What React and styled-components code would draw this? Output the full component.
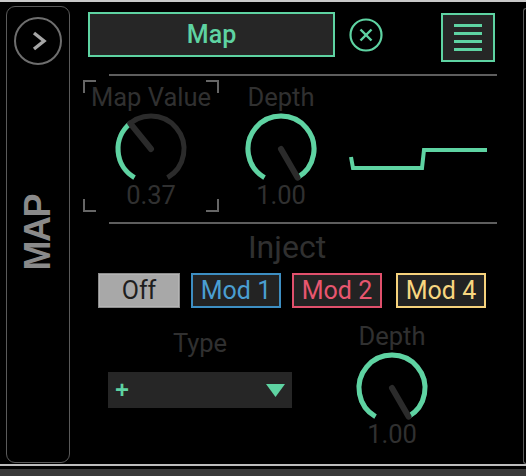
import React from "react";
import styled, { createGlobalStyle } from "styled-components";

const GREEN = "#5ed3a2";
const DARK = "#2b2b2b";
const LABEL = "#303030";

const GlobalStyle = createGlobalStyle`
  html, body {
    margin: 0;
    padding: 0;
    background: #000;
  }
  body {
    font-family: Roboto, "Liberation Sans", sans-serif;
  }
`;

const polar = (cx, cy, r, deg) => {
  const a = (deg * Math.PI) / 180;
  return [cx + r * Math.sin(a), cy - r * Math.cos(a)];
};

const arcPath = (cx, cy, r, from, to) => {
  const [x1, y1] = polar(cx, cy, r, from);
  const [x2, y2] = polar(cx, cy, r, to);
  const large = to - from > 180 ? 1 : 0;
  return `M ${x1} ${y1} A ${r} ${r} 0 ${large} 1 ${x2} ${y2}`;
};

const Knob = ({ value }) => {
  const c = 36;
  const r = 33;
  const end = -150 + 300 * value;
  const [px, py] = polar(c, c, r, end);
  return (
    <KnobSvg width="72" height="72" viewBox="0 0 72 72">
      <path d={arcPath(c, c, r, -150, 150)} stroke={DARK} strokeWidth="5" fill="none" />
      <path d={arcPath(c, c, r, -150, end)} stroke={GREEN} strokeWidth="5" fill="none" />
      <line x1={c} y1={c} x2={px} y2={py} stroke={DARK} strokeWidth="6" strokeLinecap="round" />
    </KnobSvg>
  );
};

const KnobGroup = ({ label, value, display }) => (
  <>
    <Label>{label}</Label>
    <Knob value={value} />
    <Value>{display}</Value>
  </>
);

export default function App() {
  return (
    <Page>
      <GlobalStyle />
      <TopStrip />
      <Main>
        <SidePanel>
          <ExpandButton>
            <svg width="20" height="24" viewBox="0 0 20 24">
              <polyline points="5,4 15,12 5,20" fill="none" stroke="#a6a6a6" strokeWidth="3.4" />
            </svg>
          </ExpandButton>
          <SideTitle>MAP</SideTitle>
        </SidePanel>

        <Content>
          <Header>
            <MapButton>Map</MapButton>
            <CloseIcon width="34" height="34" viewBox="0 0 34 34">
              <circle cx="17" cy="17" r="15.5" fill="none" stroke={GREEN} strokeWidth="2.2" />
              <line x1="11.5" y1="11.5" x2="22.5" y2="22.5" stroke={GREEN} strokeWidth="2.4" />
              <line x1="22.5" y1="11.5" x2="11.5" y2="22.5" stroke={GREEN} strokeWidth="2.4" />
            </CloseIcon>
            <MenuButton>
              <MenuLine />
              <MenuLine />
              <MenuLine />
              <MenuLine />
            </MenuButton>
          </Header>

          <Separator $top={12} />

          <MappingRow>
            <MapValueBox>
              <Corner $v="top" $h="left" />
              <Corner $v="top" $h="right" />
              <Corner $v="bottom" $h="left" />
              <Corner $v="bottom" $h="right" />
              <KnobGroup label="Map Value" value={0.37} display="0.37" />
            </MapValueBox>
            <KnobColumn $left={22}>
              <KnobGroup label="Depth" value={1} display="1.00" />
            </KnobColumn>
            <Wave width="140" height="26" viewBox="0 0 140 26">
              <polyline
                points="2,11 4,22 73,22 75,4 138,4"
                fill="none"
                stroke={GREEN}
                strokeWidth="4"
              />
            </Wave>
          </MappingRow>

          <Separator $top={10} />

          <SectionTitle>Inject</SectionTitle>

          <ModRow>
            <OffButton>Off</OffButton>
            <ModButton $color="#3d8ec2" $text="#4a9ed2">Mod 1</ModButton>
            <ModButton $color="#e0506c" $text="#e8566f">Mod 2</ModButton>
            <ModButton $color="#f6d27c" $text="#f8d680" $gap={3}>Mod 4</ModButton>
          </ModRow>

          <InjectRow>
            <TypeColumn>
              <Label>Type</Label>
              <Dropdown>
                <Plus>+</Plus>
                <svg width="19" height="13" viewBox="0 0 19 13">
                  <polygon points="0,0 19,0 9.5,13" fill={GREEN} />
                </svg>
              </Dropdown>
            </TypeColumn>
            <KnobColumn $left={60} $pad={0}>
              <KnobGroup label="Depth" value={1} display="1.00" />
            </KnobColumn>
          </InjectRow>
        </Content>

        <NextPanel />
      </Main>
      <BottomLine />
      <BottomGap />
      <BottomBar />
    </Page>
  );
}

const Page = styled.div`
  width: 526px;
  height: 476px;
  display: flex;
  flex-direction: column;
  background: #000;
  overflow: hidden;
`;

const TopStrip = styled.div`
  height: 2px;
  background: #c9c9c9;
`;

const Main = styled.div`
  height: 462px;
  display: flex;
  align-items: flex-start;
`;

const SidePanel = styled.div`
  box-sizing: border-box;
  width: 64px;
  height: 457px;
  margin: 4px 0 0 6px;
  border: 1.5px solid #5a5a5a;
  border-radius: 9px;
  display: flex;
  flex-direction: column;
  align-items: center;
`;

const ExpandButton = styled.div`
  box-sizing: border-box;
  width: 48px;
  height: 48px;
  margin-top: 10px;
  border: 2px solid #6e6e6e;
  border-radius: 50%;
  display: flex;
  align-items: center;
  justify-content: center;
  padding-left: 2px;
`;

const SideTitle = styled.div`
  margin-top: 130px;
  writing-mode: vertical-rl;
  transform: rotate(180deg);
  font-family: "Liberation Sans", Arial, sans-serif;
  font-weight: bold;
  font-size: 36px;
  line-height: 36px;
  letter-spacing: -1.5px;
  color: #8a8a8a;
`;

const Content = styled.div`
  flex: 1;
  display: flex;
  flex-direction: column;
`;

const Header = styled.div`
  display: flex;
  align-items: flex-start;
  padding: 10px 0 0 18px;
`;

const MapButton = styled.div`
  box-sizing: border-box;
  width: 247px;
  height: 45px;
  border: 2px solid ${GREEN};
  background: #262626;
  color: ${GREEN};
  font-size: 25px;
  font-weight: 500;
  display: flex;
  align-items: center;
  justify-content: center;
`;

const CloseIcon = styled.svg`
  margin: 6px 0 0 14px;
`;

const MenuButton = styled.div`
  box-sizing: border-box;
  width: 54px;
  height: 49px;
  margin: 1px 0 0 58px;
  border: 2px solid ${GREEN};
  background: #262626;
  display: flex;
  flex-direction: column;
  align-items: center;
  justify-content: center;
  gap: 5px;
`;

const MenuLine = styled.div`
  width: 28px;
  height: 3px;
  background: ${GREEN};
`;

const Separator = styled.div`
  width: 388px;
  height: 2px;
  margin: ${(p) => p.$top}px 0 0 39px;
  background: #5e5e5e;
`;

const MappingRow = styled.div`
  display: flex;
  align-items: flex-start;
  margin-top: 4px;
`;

const MapValueBox = styled.div`
  position: relative;
  box-sizing: border-box;
  width: 136px;
  height: 132px;
  margin-left: 13px;
  padding-top: 3px;
  display: flex;
  flex-direction: column;
  align-items: center;
`;

const Corner = styled.span`
  position: absolute;
  width: 11px;
  height: 11px;
  ${(p) => p.$v}: 0;
  ${(p) => p.$h}: 0;
  border-${(p) => p.$v}: 2px solid #666;
  border-${(p) => p.$h}: 2px solid #666;
`;

const KnobColumn = styled.div`
  width: 80px;
  margin-left: ${(p) => p.$left}px;
  padding-top: ${(p) => (p.$pad === undefined ? 3 : p.$pad)}px;
  display: flex;
  flex-direction: column;
  align-items: center;
`;

const Label = styled.div`
  font-size: 25.5px;
  line-height: 28px;
  color: ${LABEL};
  white-space: nowrap;
`;

const KnobSvg = styled.svg`
  display: block;
  margin-top: 2px;
  overflow: visible;
`;

const Value = styled.div`
  margin-top: -4px;
  font-size: 25.5px;
  line-height: 28px;
  color: ${LABEL};
`;

const Wave = styled.svg`
  margin: 66px 0 0 28px;
`;

const SectionTitle = styled.div`
  width: 160px;
  margin: 8px 0 0 137px;
  text-align: center;
  font-size: 32px;
  line-height: 30px;
  color: ${LABEL};
`;

const ModRow = styled.div`
  display: flex;
  gap: 11px;
  margin: 11px 0 0 28px;
`;

const OffButton = styled.div`
  box-sizing: border-box;
  width: 82px;
  height: 35px;
  background: #a8a8a8;
  border: 1px solid #8c8c8c;
  box-shadow: inset 0 0 0 1px #b4b4b4;
  color: #1e1e1e;
  font-size: 25px;
  display: flex;
  align-items: center;
  justify-content: center;
`;

const ModButton = styled.div`
  box-sizing: border-box;
  width: 90px;
  height: 35px;
  margin-left: ${(p) => p.$gap || 0}px;
  background: #232323;
  border: 2px solid ${(p) => p.$color};
  color: ${(p) => p.$text};
  font-size: 25px;
  display: flex;
  align-items: center;
  justify-content: center;
`;

const InjectRow = styled.div`
  display: flex;
  align-items: flex-start;
  margin-top: 14px;
`;

const TypeColumn = styled.div`
  width: 184px;
  margin-left: 38px;
  padding-top: 7px;
  display: flex;
  flex-direction: column;
  align-items: center;
`;

const Dropdown = styled.div`
  box-sizing: border-box;
  width: 184px;
  height: 36px;
  margin-top: 15px;
  padding: 0 7px;
  background: #262626;
  display: flex;
  align-items: center;
  justify-content: space-between;
`;

const Plus = styled.span`
  font-family: "Liberation Sans", Arial, sans-serif;
  font-weight: bold;
  font-size: 24px;
  line-height: 24px;
  color: ${GREEN};
`;

const NextPanel = styled.div`
  box-sizing: border-box;
  width: 3px;
  height: 456px;
  margin-top: 6px;
  border-left: 1.5px solid #5a5a5a;
  border-top: 1.5px solid #5a5a5a;
  border-bottom: 1.5px solid #5a5a5a;
  border-radius: 8px 0 0 8px;
`;

const BottomLine = styled.div`
  height: 2px;
  background: #bdbdbd;
`;

const BottomGap = styled.div`
  height: 3px;
`;

const BottomBar = styled.div`
  flex: 1;
  background: #3a3a3a;
`;
